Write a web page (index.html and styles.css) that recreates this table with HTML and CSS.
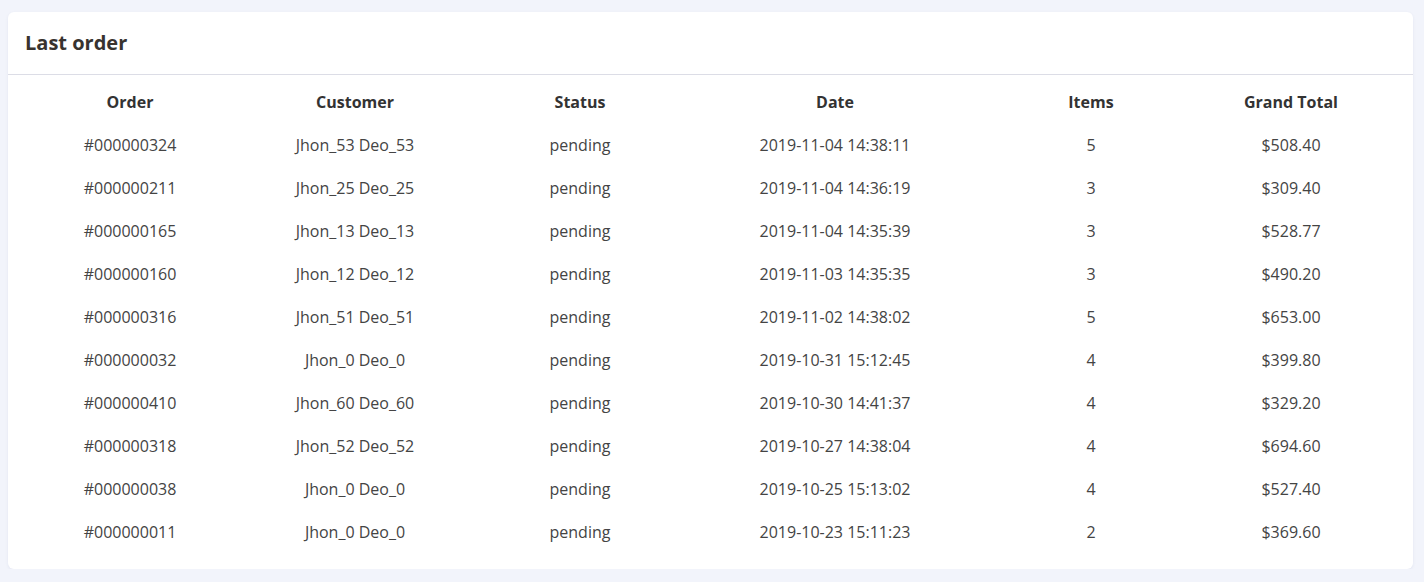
FILE: index.html
```html
<!DOCTYPE html>
<html>
<head>
<meta charset="utf-8">
<link rel="stylesheet" href="styles.css">
</head>
<body>
<div class="card">
  <div class="card-header"><h2 class="card-title">Last order</h2></div>
  <table class="orders">
    <colgroup>
      <col class="c1"><col class="c2"><col class="c3"><col class="c4"><col class="c5"><col class="c6">
    </colgroup>
    <thead>
      <tr><th>Order</th><th>Customer</th><th>Status</th><th>Date</th><th>Items</th><th>Grand Total</th></tr>
    </thead>
    <tbody>
      <tr><td>#000000324</td><td>Jhon_53 Deo_53</td><td>pending</td><td>2019-11-04 14:38:11</td><td>5</td><td>$508.40</td></tr>
      <tr><td>#000000211</td><td>Jhon_25 Deo_25</td><td>pending</td><td>2019-11-04 14:36:19</td><td>3</td><td>$309.40</td></tr>
      <tr><td>#000000165</td><td>Jhon_13 Deo_13</td><td>pending</td><td>2019-11-04 14:35:39</td><td>3</td><td>$528.77</td></tr>
      <tr><td>#000000160</td><td>Jhon_12 Deo_12</td><td>pending</td><td>2019-11-03 14:35:35</td><td>3</td><td>$490.20</td></tr>
      <tr><td>#000000316</td><td>Jhon_51 Deo_51</td><td>pending</td><td>2019-11-02 14:38:02</td><td>5</td><td>$653.00</td></tr>
      <tr><td>#000000032</td><td>Jhon_0 Deo_0</td><td>pending</td><td>2019-10-31 15:12:45</td><td>4</td><td>$399.80</td></tr>
      <tr><td>#000000410</td><td>Jhon_60 Deo_60</td><td>pending</td><td>2019-10-30 14:41:37</td><td>4</td><td>$329.20</td></tr>
      <tr><td>#000000318</td><td>Jhon_52 Deo_52</td><td>pending</td><td>2019-10-27 14:38:04</td><td>4</td><td>$694.60</td></tr>
      <tr><td>#000000038</td><td>Jhon_0 Deo_0</td><td>pending</td><td>2019-10-25 15:13:02</td><td>4</td><td>$527.40</td></tr>
      <tr><td>#000000011</td><td>Jhon_0 Deo_0</td><td>pending</td><td>2019-10-23 15:11:23</td><td>2</td><td>$369.60</td></tr>
    </tbody>
  </table>
</div>
</body>
</html>
```
FILE: styles.css
```css
html, body {
  margin: 0;
  padding: 0;
  background: #f2f4fb;
}
body {
  padding: 12px 11px 0 8px;
  font-family: "Open Sans", "Noto Sans", sans-serif;
  color: #444;
}
.card {
  background: #fff;
  border-radius: 6px;
  box-shadow: 0 1px 3px rgba(120, 130, 170, 0.12);
  height: 557px;
  box-sizing: border-box;
}
.card-header {
  height: 63px;
  border-bottom: 1px solid #dcdde6;
  box-sizing: border-box;
  display: flex;
  align-items: center;
  padding: 0 17px 1px;
}
.card-title {
  margin: 0;
  font-size: 20px;
  font-weight: 700;
  color: #38332f;
}
.orders {
  border-collapse: collapse;
  table-layout: fixed;
  margin: 5px 0 0 10px;
  width: 1360px;
}
.c1 { width: 224px; }
.c2 { width: 226px; }
.c3 { width: 224px; }
.c4 { width: 286px; }
.c5 { width: 226px; }
.c6 { width: 174px; }
.orders th, .orders td {
  height: 43px;
  padding: 0;
  text-align: center;
  vertical-align: middle;
  font-size: 16px;
  white-space: nowrap;
}
.orders th {
  font-weight: 700;
  color: #333;
}
.orders td {
  color: #444;
}
```
